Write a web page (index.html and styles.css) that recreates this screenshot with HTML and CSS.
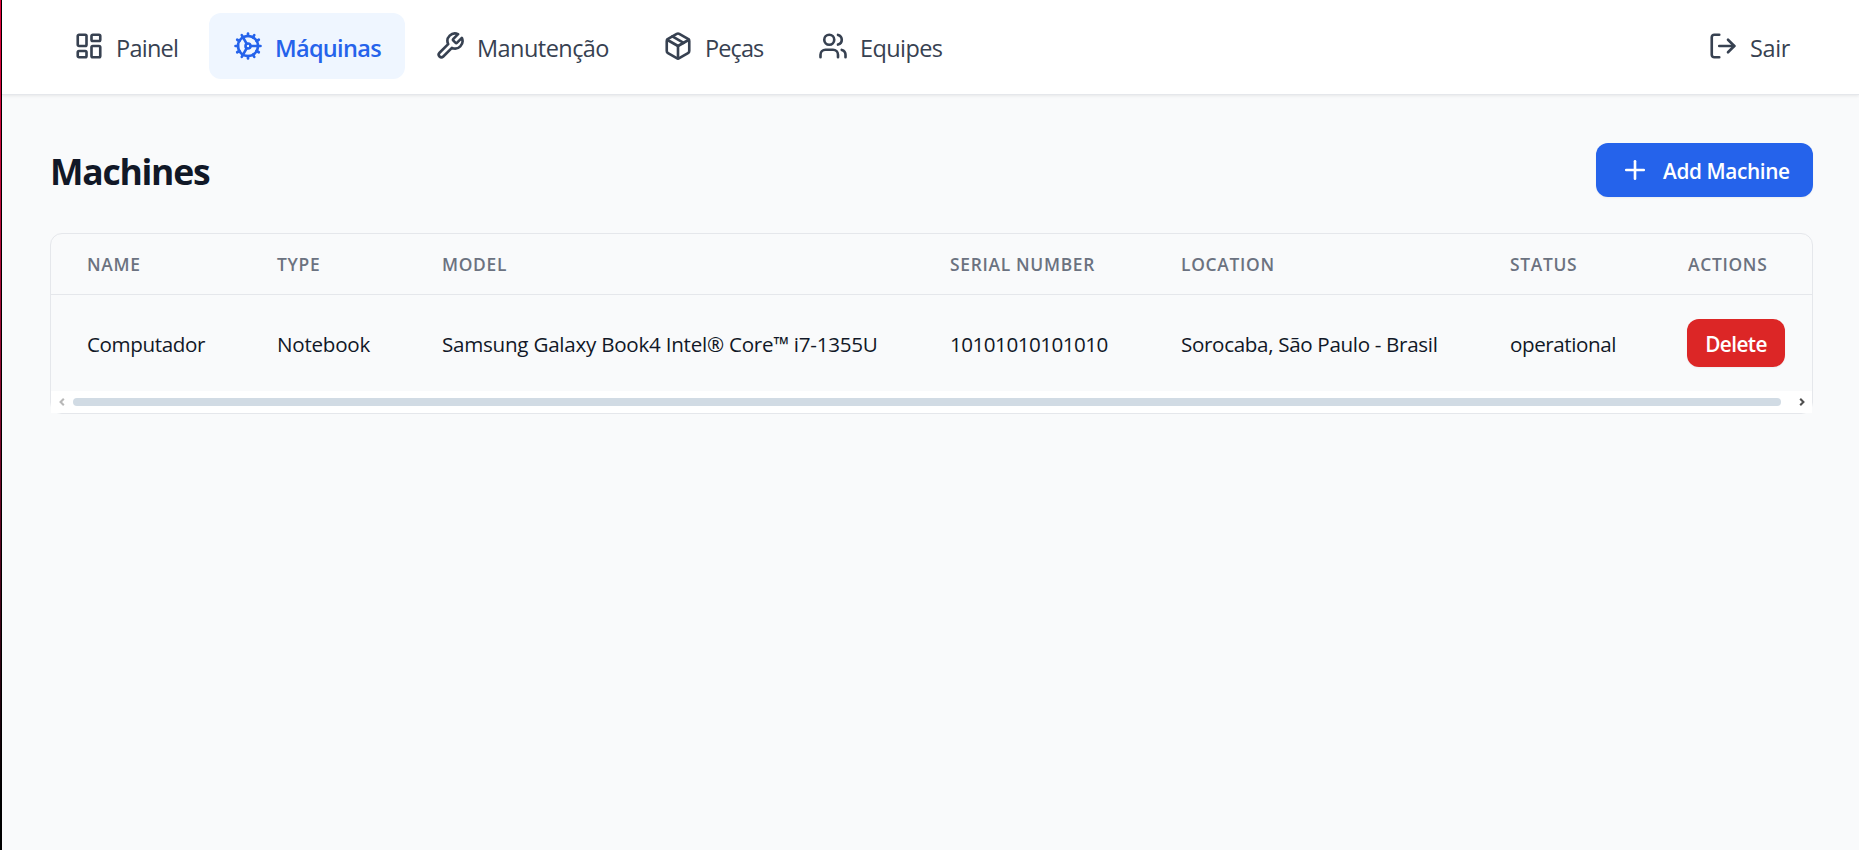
FILE: index.html
```html
<!DOCTYPE html>
<html lang="pt-BR">
<head>
<meta charset="utf-8">
<title>Machines</title>
<link rel="stylesheet" href="styles.css">
</head>
<body>
<div class="edge"></div>
<div class="app">
  <header class="topbar">
    <nav class="nav">
      <a class="link painel"><svg class="icon" viewBox="0 0 24 24"><rect x="3" y="3" width="7" height="9" rx="1"/><rect x="14" y="3" width="7" height="5" rx="1"/><rect x="14" y="12" width="7" height="9" rx="1"/><rect x="3" y="16" width="7" height="5" rx="1"/></svg><span>Painel</span></a>
      <a class="link active maquinas"><svg class="icon" viewBox="0 0 24 24"><path d="M12 20a8 8 0 1 0 0-16 8 8 0 0 0 0 16Z"/><path d="M12 14a2 2 0 1 0 0-4 2 2 0 0 0 0 4Z"/><path d="M12 2v2"/><path d="M12 22v-2"/><path d="m17 20.66-1-1.73"/><path d="M11 10.27 7 3.34"/><path d="m20.66 17-1.73-1"/><path d="m3.34 7 1.73 1"/><path d="M14 12h8"/><path d="M2 12h2"/><path d="m20.66 7-1.73 1"/><path d="m3.34 17 1.73-1"/><path d="m17 3.34-1 1.73"/><path d="m11 13.73-4 6.93"/></svg><span>Máquinas</span></a>
      <a class="link manutencao"><svg class="icon" viewBox="0 0 24 24"><path d="M14.7 6.3a1 1 0 0 0 0 1.4l1.6 1.6a1 1 0 0 0 1.4 0l3.77-3.77a6 6 0 0 1-7.94 7.94l-6.91 6.91a2.12 2.12 0 0 1-3-3l6.91-6.91a6 6 0 0 1 7.94-7.94l-3.76 3.76z"/></svg><span>Manutenção</span></a>
      <a class="link pecas"><svg class="icon" viewBox="0 0 24 24"><path d="m7.5 4.27 9 5.15"/><path d="M21 8a2 2 0 0 0-1-1.73l-7-4a2 2 0 0 0-2 0l-7 4A2 2 0 0 0 3 8v8a2 2 0 0 0 1 1.73l7 4a2 2 0 0 0 2 0l7-4A2 2 0 0 0 21 16Z"/><path d="m3.3 7 8.7 5 8.7-5"/><path d="M12 22V12"/></svg><span>Peças</span></a>
      <a class="link equipes"><svg class="icon" viewBox="0 0 24 24"><path d="M16 21v-2a4 4 0 0 0-4-4H6a4 4 0 0 0-4 4v2"/><circle cx="9" cy="7" r="4"/><path d="M22 21v-2a4 4 0 0 0-3-3.87"/><path d="M16 3.13a4 4 0 0 1 0 7.75"/></svg><span>Equipes</span></a>
    </nav>
    <a class="link sair"><svg class="icon" viewBox="0 0 24 24"><path d="M9 21H5a2 2 0 0 1-2-2V5a2 2 0 0 1 2-2h4"/><path d="m16 17 5-5-5-5"/><path d="M21 12H9"/></svg><span>Sair</span></a>
  </header>
  <main class="main">
    <div class="heading">
      <h1 class="title">Machines</h1>
      <button class="btn add"><svg class="icon" viewBox="0 0 24 24"><path d="M5 12h14"/><path d="M12 5v14"/></svg><span>Add Machine</span></button>
    </div>
    <section class="card">
      <div class="row head">
        <div class="cell">Name</div><div class="cell">Type</div><div class="cell">Model</div><div class="cell">Serial Number</div><div class="cell">Location</div><div class="cell">Status</div><div class="cell">Actions</div>
      </div>
      <div class="row body">
        <div class="cell name">Computador</div><div class="cell">Notebook</div><div class="cell">Samsung Galaxy Book4 Intel® Core™ i7-1355U</div><div class="cell serial">10101010101010</div><div class="cell place">Sorocaba, São Paulo - Brasil</div><div class="cell status">operational</div><div class="cell action"><button class="btn delete">Delete</button></div>
      </div>
      <div class="scroll">
        <svg class="arrow" viewBox="0 0 6 8"><path d="M4.8 .8 1.6 4l3.2 3.2"/></svg>
        <div class="thumb"></div>
        <svg class="arrow next" viewBox="0 0 6 8"><path d="M1.2 .8 4.4 4 1.2 7.2"/></svg>
      </div>
    </section>
  </main>
</div>
</body>
</html>
```
FILE: styles.css
```css
* { box-sizing: border-box; }
body {
  margin: 0;
  height: 850px;
  display: flex;
  overflow: hidden;
  background: #f9fafb;
  color: #111827;
  font-family: "Open Sans", "Noto Sans", sans-serif;
}
.edge {
  width: 2px;
  flex: none;
  border-right: 1px solid #000;
  background: linear-gradient(#e6053f 0, #c00a3c 200px, #960a34 350px, #6b0626 500px, #1c020c 720px, #000 800px);
}
.app { flex: 1; min-width: 0; }

.topbar {
  height: 95px;
  padding: 13px 20px 15px 48px;
  display: flex;
  justify-content: space-between;
  background: #fff;
  border-bottom: 1px solid #e5e7eb;
  box-shadow: 0 1px 3px rgba(0, 0, 0, .08);
}
.nav { display: flex; gap: 6px; }
.link {
  height: 66px;
  padding: 0 24px;
  display: flex;
  align-items: center;
  gap: 12px;
  border-radius: 12px;
  color: #374151;
  font-size: 23.5px;
  line-height: 36px;
}
.link span { padding-top: 3px; white-space: nowrap; }
.active { background: #eff6ff; color: #2563eb; font-weight: 600; }
.painel { letter-spacing: -.75px; width: 153px; }
.maquinas { letter-spacing: -.68px; width: 196px; }
.manutencao { letter-spacing: -.55px; width: 222px; }
.pecas { letter-spacing: -.9px; width: 149px; }
.equipes { letter-spacing: -.6px; }
.sair { letter-spacing: -.4px; width: 155px; padding-right: 0; }
.icon {
  width: 30px;
  height: 30px;
  flex: none;
  fill: none;
  stroke: currentColor;
  stroke-width: 2.1;
  stroke-linecap: round;
  stroke-linejoin: round;
}

.main { padding: 48px 46px 0 48px; }
.heading {
  display: flex;
  justify-content: space-between;
  align-items: center;
  height: 54px;
  margin-bottom: 36px;
}
.title {
  margin: 0;
  padding-top: 2px;
  font-size: 35.5px;
  line-height: 48px;
  font-weight: 700;
  letter-spacing: -1.25px;
}
.btn {
  border: 0;
  border-radius: 12px;
  color: #fff;
  font-family: inherit;
  font-size: 20.8px;
  font-weight: 600;
  line-height: 30px;
  white-space: nowrap;
  box-shadow: 0 1px 2px rgba(0, 0, 0, .05);
}
.add {
  width: 217px;
  height: 54px;
  padding: 2px 0 0 24px;
  display: flex;
  align-items: center;
  gap: 13px;
  background: #2563eb;
  letter-spacing: -.37px;
}
.add .icon { margin-top: -2px; }

.card {
  height: 181px;
  border: 1px solid #e5e7eb;
  border-radius: 12px;
}
.row {
  display: grid;
  grid-template-columns: 190px 165px 508px 231px 329px 178px 1fr;
  align-items: center;
}
.cell { padding-left: 36px; white-space: nowrap; }
.head {
  height: 61px;
  border-bottom: 1px solid #e5e7eb;
  color: #6b7280;
  font-size: 17.4px;
  font-weight: 600;
  letter-spacing: .7px;
  text-transform: uppercase;
}
.body {
  height: 96px;
  padding-top: 1px;
  font-size: 20.6px;
  letter-spacing: -.25px;
}
.name { letter-spacing: -.38px; }
.serial { letter-spacing: -.5px; }
.place { letter-spacing: -.33px; }
.status { letter-spacing: -.42px; }
.action { padding-left: 35px; }
.delete {
  display: block;
  width: 98px;
  height: 48px;
  margin-top: -1px;
  padding: 2px 0 0;
  background: #dc2626;
  letter-spacing: -.6px;
}
.scroll {
  height: 22px;
  padding: 0 7px 0 8px;
  display: flex;
  align-items: center;
  background: #fff;
}
.arrow {
  width: 6px;
  height: 8px;
  flex: none;
  fill: none;
  stroke: #b8b8b8;
  stroke-width: 2.1;
}
.next { stroke: #505050; }
.thumb {
  height: 8px;
  flex: 1;
  margin: 0 18px 0 8px;
  border-radius: 4px;
  background: #d1dbe4;
}
```
